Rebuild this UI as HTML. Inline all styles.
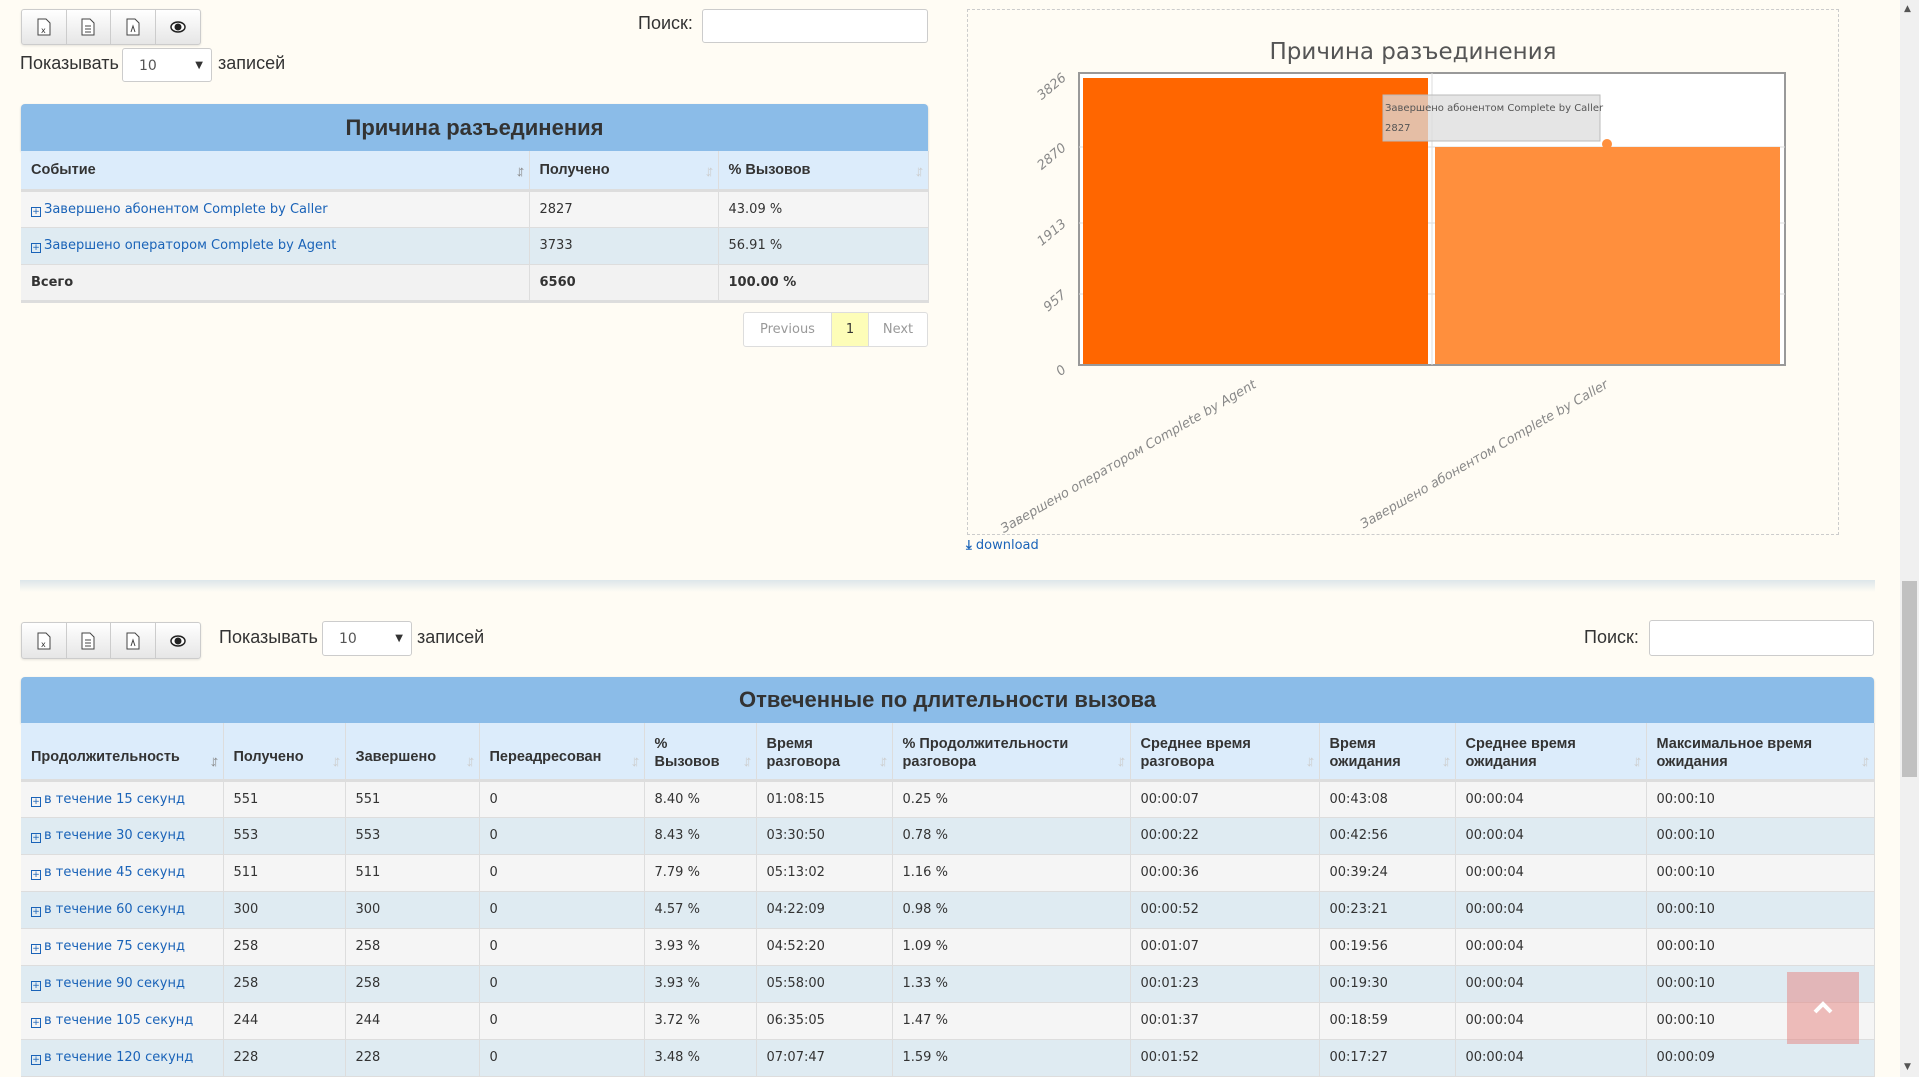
<!DOCTYPE html>
<html><head><meta charset="utf-8"><style>
*{box-sizing:border-box;margin:0;padding:0}
body{width:1919px;height:1077px;overflow:hidden;background:#fffcf4;font-family:"DejaVu Sans","Liberation Sans",sans-serif;font-size:13px;color:#333;position:relative}
.a{position:absolute}
.btns{display:flex;border:1px solid #ccc;border-radius:3px;background:linear-gradient(#fff,#e6e6e6);box-shadow:0 1px 2px rgba(0,0,0,.1)}
.btns div{width:44.5px;height:100%;border-right:1px solid #ccc;display:flex;align-items:center;justify-content:center}
.btns div:last-child{border-right:none}
.inp{background:#fff;border:1px solid #ccc;border-radius:3px}
.lbl{font-family:"Liberation Sans Narrow","Liberation Sans",sans-serif;font-size:18px;color:#333}
.sel{background:#fff;border:1px solid #ccc;border-radius:3px;font-size:14px;padding-left:16px;line-height:34px;color:#555}
.sel:after{content:"▼";position:absolute;right:8px;top:0;font-size:10px;color:#333}
.hd{background:#8bbce8;border-radius:4px 4px 0 0;text-align:center;font-family:"Liberation Sans Narrow","Liberation Sans",sans-serif;font-weight:bold;font-size:21px;color:#333;box-shadow:0 1px 2px rgba(0,0,0,.2)}
table{border-collapse:collapse;table-layout:fixed;position:absolute}
th{background:#dcecfb;text-align:left;font-family:"Liberation Sans Narrow","Liberation Sans",sans-serif;font-size:14.5px;font-weight:bold;color:#333;padding:0 10px;border-right:1px solid #ddd;border-bottom:3px solid #ddd;position:relative;line-height:18px}
th:after{content:"↓↑";position:absolute;right:8px;bottom:8px;font-size:15px;color:#ccc;letter-spacing:-5px;font-weight:normal}
th.s:after{color:#888}
td{padding:0 10px;border-right:1px solid #ddd;border-bottom:1px solid #ddd;white-space:nowrap;overflow:hidden}
tr.o td{background:#f5f5f5}
tr.e td{background:#dfebf2}
a{color:#1a63b8;text-decoration:none}
.pl{display:inline-block;width:10px;height:10px;border:1px solid #1a63b8;font-size:9px;line-height:8px;text-align:center;margin-right:3px;vertical-align:-1px;color:#1a63b8}
</style></head><body>

<div class="a btns" style="left:21px;top:9px;width:180px;height:36px">
<div><svg width="14" height="18" viewBox="0 0 14 18"><path d="M1 1h8l4 4v12H1z" fill="#fff" stroke="#444"/><text x="4" y="15" font-size="8" fill="#333">x</text></svg></div>
<div><svg width="14" height="18" viewBox="0 0 14 18"><path d="M1 1h8l4 4v12H1z" fill="#fff" stroke="#444"/><path d="M4 8h6M4 11h6M4 14h6" stroke="#444"/></svg></div>
<div><svg width="14" height="18" viewBox="0 0 14 18"><path d="M1 1h8l4 4v12H1z" fill="#fff" stroke="#444"/><path d="M5 14l2-6 2 6" stroke="#444" fill="none"/></svg></div>
<div><svg width="16" height="12" viewBox="0 0 16 12"><ellipse cx="8" cy="6" rx="7" ry="5" fill="#fff" stroke="#222" stroke-width="1.5"/><circle cx="8" cy="6" r="3.5" fill="#222"/></svg></div>
</div>
<div class="a lbl" style="left:638px;top:13px">Поиск:</div>
<div class="a inp" style="left:702px;top:9px;width:226px;height:34px"></div>
<div class="a lbl" style="left:20px;top:53px">Показывать</div>
<div class="a sel" style="left:122px;top:48px;width:90px;height:34px;position:absolute">10</div>
<div class="a lbl" style="left:218px;top:53px">записей</div>

<div class="a hd" style="left:21px;top:104px;width:907px;height:47px;line-height:47px;font-size:22px">Причина разъединения</div>
<table style="left:21px;top:151px;width:907px">
<colgroup><col style="width:508px"><col style="width:189px"><col style="width:210px"></colgroup>
<tr style="height:39px"><th class="s">Событие</th><th>Получено</th><th>% Вызовов</th></tr>
<tr class="o" style="height:37px"><td><span class="pl">+</span><a>Завершено абонентом Complete by Caller</a></td><td>2827</td><td>43.09 %</td></tr>
<tr class="e" style="height:37px"><td><span class="pl">+</span><a>Завершено оператором Complete by Agent</a></td><td>3733</td><td>56.91 %</td></tr>
<tr class="o" style="height:37px;font-weight:bold"><td style="background:#f2f2f2;border-bottom:3px solid #ddd">Всего</td><td style="background:#f2f2f2;border-bottom:3px solid #ddd">6560</td><td style="background:#f2f2f2;border-bottom:3px solid #ddd">100.00 %</td></tr>
</table>
<div class="a" style="left:743px;top:312px;width:185px;height:35px;border:1px solid #ddd;border-radius:3px;display:flex;font-size:13px;background:#fff">
<div style="width:87px;text-align:center;line-height:33px;color:#999">Previous</div>
<div style="width:38px;text-align:center;line-height:33px;background:#fdfdb8;border-left:1px solid #ddd;border-right:1px solid #ddd">1</div>
<div style="flex:1;text-align:center;line-height:33px;color:#999">Next</div>
</div>

<div class="a" style="left:967px;top:9px;width:872px;height:526px;border:1px dashed #ccc"></div>
<svg class="a" style="left:967px;top:9px" width="872" height="526">
<text x="446" y="50" text-anchor="middle" font-family="DejaVu Sans" font-size="23" fill="#555">Причина разъединения</text>
<rect x="112" y="64" width="706" height="292" fill="#fff" stroke="#999" stroke-width="2"/>
<g stroke="#ddd"><line x1="112" y1="138" x2="818" y2="138"/><line x1="112" y1="214" x2="818" y2="214"/><line x1="112" y1="285" x2="818" y2="285"/><line x1="465" y1="64" x2="465" y2="356"/></g>
<rect x="116" y="69" width="345" height="286" fill="#ff6600"/>
<rect x="468" y="138" width="345" height="217" fill="#ff8f3d"/>
<rect x="416" y="86" width="217" height="46" fill="#dcdcdc" fill-opacity=".75" stroke="#bbb"/>
<text x="418" y="102" font-size="10" fill="#555">Завершено абонентом Complete by Caller</text>
<text x="418" y="122" font-size="10" fill="#555">2827</text>
<circle cx="640" cy="135" r="5" fill="#ff8f3d"/>
<g font-size="13" fill="#888" font-style="italic" text-anchor="end">
<text transform="translate(100,70) rotate(-40)">3826</text>
<text transform="translate(100,140) rotate(-40)">2870</text>
<text transform="translate(100,216) rotate(-40)">1913</text>
<text transform="translate(100,287) rotate(-40)">957</text>
<text transform="translate(100,362) rotate(-40)">0</text>
<text transform="translate(290,378) rotate(-30)">Завершено оператором Complete by Agent</text>
<text transform="translate(642,378) rotate(-30)">Завершено абонентом Complete by Caller</text>
</g>
</svg>
<div class="a" style="left:966px;top:538px;font-size:13px;color:#1a63b8"><span style="font-weight:bold">⤓</span> download</div>

<div class="a" style="left:20px;top:580px;width:1855px;height:12px;background:linear-gradient(#dde6ea,rgba(255,252,244,0))"></div>

<div class="a btns" style="left:21px;top:622px;width:180px;height:37px">
<div><svg width="14" height="18" viewBox="0 0 14 18"><path d="M1 1h8l4 4v12H1z" fill="#fff" stroke="#444"/><text x="4" y="15" font-size="8" fill="#333">x</text></svg></div>
<div><svg width="14" height="18" viewBox="0 0 14 18"><path d="M1 1h8l4 4v12H1z" fill="#fff" stroke="#444"/><path d="M4 8h6M4 11h6M4 14h6" stroke="#444"/></svg></div>
<div><svg width="14" height="18" viewBox="0 0 14 18"><path d="M1 1h8l4 4v12H1z" fill="#fff" stroke="#444"/><path d="M5 14l2-6 2 6" stroke="#444" fill="none"/></svg></div>
<div><svg width="16" height="12" viewBox="0 0 16 12"><ellipse cx="8" cy="6" rx="7" ry="5" fill="#fff" stroke="#222" stroke-width="1.5"/><circle cx="8" cy="6" r="3.5" fill="#222"/></svg></div>
</div>
<div class="a lbl" style="left:219px;top:627px">Показывать</div>
<div class="a sel" style="left:322px;top:621px;width:90px;height:35px;position:absolute">10</div>
<div class="a lbl" style="left:417px;top:627px">записей</div>
<div class="a lbl" style="left:1584px;top:627px">Поиск:</div>
<div class="a inp" style="left:1649px;top:620px;width:225px;height:36px"></div>

<div class="a hd" style="left:21px;top:677px;width:1853px;height:46px;line-height:46px;font-size:22px">Отвеченные по длительности вызова</div>
<table style="left:21px;top:723px;width:1853px">
<colgroup><col style="width:202px"><col style="width:122px"><col style="width:134px"><col style="width:165px"><col style="width:112px"><col style="width:136px"><col style="width:238px"><col style="width:189px"><col style="width:136px"><col style="width:191px"><col style="width:228px"></colgroup>
<tr style="height:57px"><th class="s" style="padding-top:12px">Продолжительность</th><th style="padding-top:12px">Получено</th><th style="padding-top:12px">Завершено</th><th style="padding-top:12px">Переадресован</th><th style="padding-top:4px">%<br>Вызовов</th><th style="padding-top:4px">Время<br>разговора</th><th style="padding-top:4px">% Продолжительности<br>разговора</th><th style="padding-top:4px">Среднее время<br>разговора</th><th style="padding-top:4px">Время<br>ожидания</th><th style="padding-top:4px">Среднее время<br>ожидания</th><th style="padding-top:4px">Максимальное время<br>ожидания</th></tr>
<tr class="o" style="height:37px"><td><span class="pl">+</span><a>в течение 15 секунд</a></td><td>551</td><td>551</td><td>0</td><td>8.40 %</td><td>01:08:15</td><td>0.25 %</td><td>00:00:07</td><td>00:43:08</td><td>00:00:04</td><td>00:00:10</td></tr>
<tr class="e" style="height:37px"><td><span class="pl">+</span><a>в течение 30 секунд</a></td><td>553</td><td>553</td><td>0</td><td>8.43 %</td><td>03:30:50</td><td>0.78 %</td><td>00:00:22</td><td>00:42:56</td><td>00:00:04</td><td>00:00:10</td></tr>
<tr class="o" style="height:37px"><td><span class="pl">+</span><a>в течение 45 секунд</a></td><td>511</td><td>511</td><td>0</td><td>7.79 %</td><td>05:13:02</td><td>1.16 %</td><td>00:00:36</td><td>00:39:24</td><td>00:00:04</td><td>00:00:10</td></tr>
<tr class="e" style="height:37px"><td><span class="pl">+</span><a>в течение 60 секунд</a></td><td>300</td><td>300</td><td>0</td><td>4.57 %</td><td>04:22:09</td><td>0.98 %</td><td>00:00:52</td><td>00:23:21</td><td>00:00:04</td><td>00:00:10</td></tr>
<tr class="o" style="height:37px"><td><span class="pl">+</span><a>в течение 75 секунд</a></td><td>258</td><td>258</td><td>0</td><td>3.93 %</td><td>04:52:20</td><td>1.09 %</td><td>00:01:07</td><td>00:19:56</td><td>00:00:04</td><td>00:00:10</td></tr>
<tr class="e" style="height:37px"><td><span class="pl">+</span><a>в течение 90 секунд</a></td><td>258</td><td>258</td><td>0</td><td>3.93 %</td><td>05:58:00</td><td>1.33 %</td><td>00:01:23</td><td>00:19:30</td><td>00:00:04</td><td>00:00:10</td></tr>
<tr class="o" style="height:37px"><td><span class="pl">+</span><a>в течение 105 секунд</a></td><td>244</td><td>244</td><td>0</td><td>3.72 %</td><td>06:35:05</td><td>1.47 %</td><td>00:01:37</td><td>00:18:59</td><td>00:00:04</td><td>00:00:10</td></tr>
<tr class="e" style="height:37px"><td><span class="pl">+</span><a>в течение 120 секунд</a></td><td>228</td><td>228</td><td>0</td><td>3.48 %</td><td>07:07:47</td><td>1.59 %</td><td>00:01:52</td><td>00:17:27</td><td>00:00:04</td><td>00:00:09</td></tr>
</table>

<div class="a" style="left:1787px;top:972px;width:72px;height:72px;background:rgba(230,130,125,.5)">
<svg width="72" height="72"><path d="M28 40l8-8 8 8" stroke="#fff" stroke-width="4" fill="none"/></svg></div>

<div class="a" style="left:1900px;top:0;width:19px;height:1077px;background:#f0f0f0"></div>
<div class="a" style="left:1902px;top:581px;width:15px;height:196px;background:#c1c1c1"></div>
<div class="a" style="left:1904px;top:4px;font-size:9px;color:#555">▲</div>
<div class="a" style="left:1904px;top:1062px;font-size:9px;color:#555">▼</div>
</body></html>
